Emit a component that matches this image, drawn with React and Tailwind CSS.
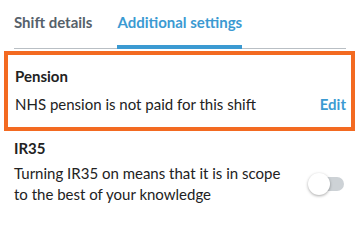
import React, { useState } from "react";

function Toggle({ on, onChange }) {
  return (
    <button
      onClick={() => onChange(!on)}
      className="relative w-[38px] h-[22px] shrink-0 flex items-center"
    >
      <span
        className={
          "ml-[6px] w-[30px] h-[14px] rounded-full " +
          (on ? "bg-[#3b9ad2]" : "bg-[#cdd2d6]")
        }
      />
      <span
        className={
          "absolute top-0 w-[22px] h-[22px] rounded-full bg-white shadow-[0_1px_3px_rgba(0,0,0,0.35)] " +
          (on ? "left-[16px]" : "left-0")
        }
      />
    </button>
  );
}

export default function App() {
  const [tab, setTab] = useState("additional");
  const [ir35, setIr35] = useState(false);

  return (
    <div
      className="w-[357px] h-[231px] bg-white text-[#222] overflow-hidden"
      style={{ fontFamily: "Lato, 'Open Sans', sans-serif" }}
    >
      {/* Tabs */}
      <div className="mx-[14px] mr-[11px] border-b border-[#b9bfc4] flex gap-[25px] pt-[11px] text-[15px] font-bold">
        <button
          onClick={() => setTab("shift")}
          className={
            "pb-[11px] -mb-px border-b-4 " +
            (tab === "shift"
              ? "text-[#3b9ad2] border-[#3b9ad2]"
              : "text-[#56616a] border-transparent")
          }
        >
          Shift details
        </button>
        <button
          onClick={() => setTab("additional")}
          className={
            "pb-[11px] -mb-px border-b-4 " +
            (tab === "additional"
              ? "text-[#3b9ad2] border-[#3b9ad2]"
              : "text-[#56616a] border-transparent")
          }
        >
          Additional settings
        </button>
      </div>

      {/* Pension (highlighted) */}
      <div className="mt-[2px] ml-[4px] mr-[2px] border-4 border-[#f36a21] pl-[7px] pr-[5px] pt-[11px] pb-[13px]">
        <div className="text-[15px] font-bold leading-[20px]">Pension</div>
        <div className="mt-[8px] flex justify-between items-center text-[15px] leading-[20px]">
          <span>NHS pension is not paid for this shift</span>
          <button className="font-bold text-[#3b9ad2]">Edit</button>
        </div>
      </div>

      {/* IR35 */}
      <div className="px-[14px] pr-[11px] pt-[7px]">
        <div className="text-[15px] font-bold leading-[20px]">IR35</div>
        <div className="mt-[5px] flex justify-between items-center">
          <p className="text-[15px] leading-[21px] w-[270px]">
            Turning IR35 on means that it is in scope to the best of your
            knowledge
          </p>
          <Toggle on={ir35} onChange={setIr35} />
        </div>
      </div>
    </div>
  );
}
